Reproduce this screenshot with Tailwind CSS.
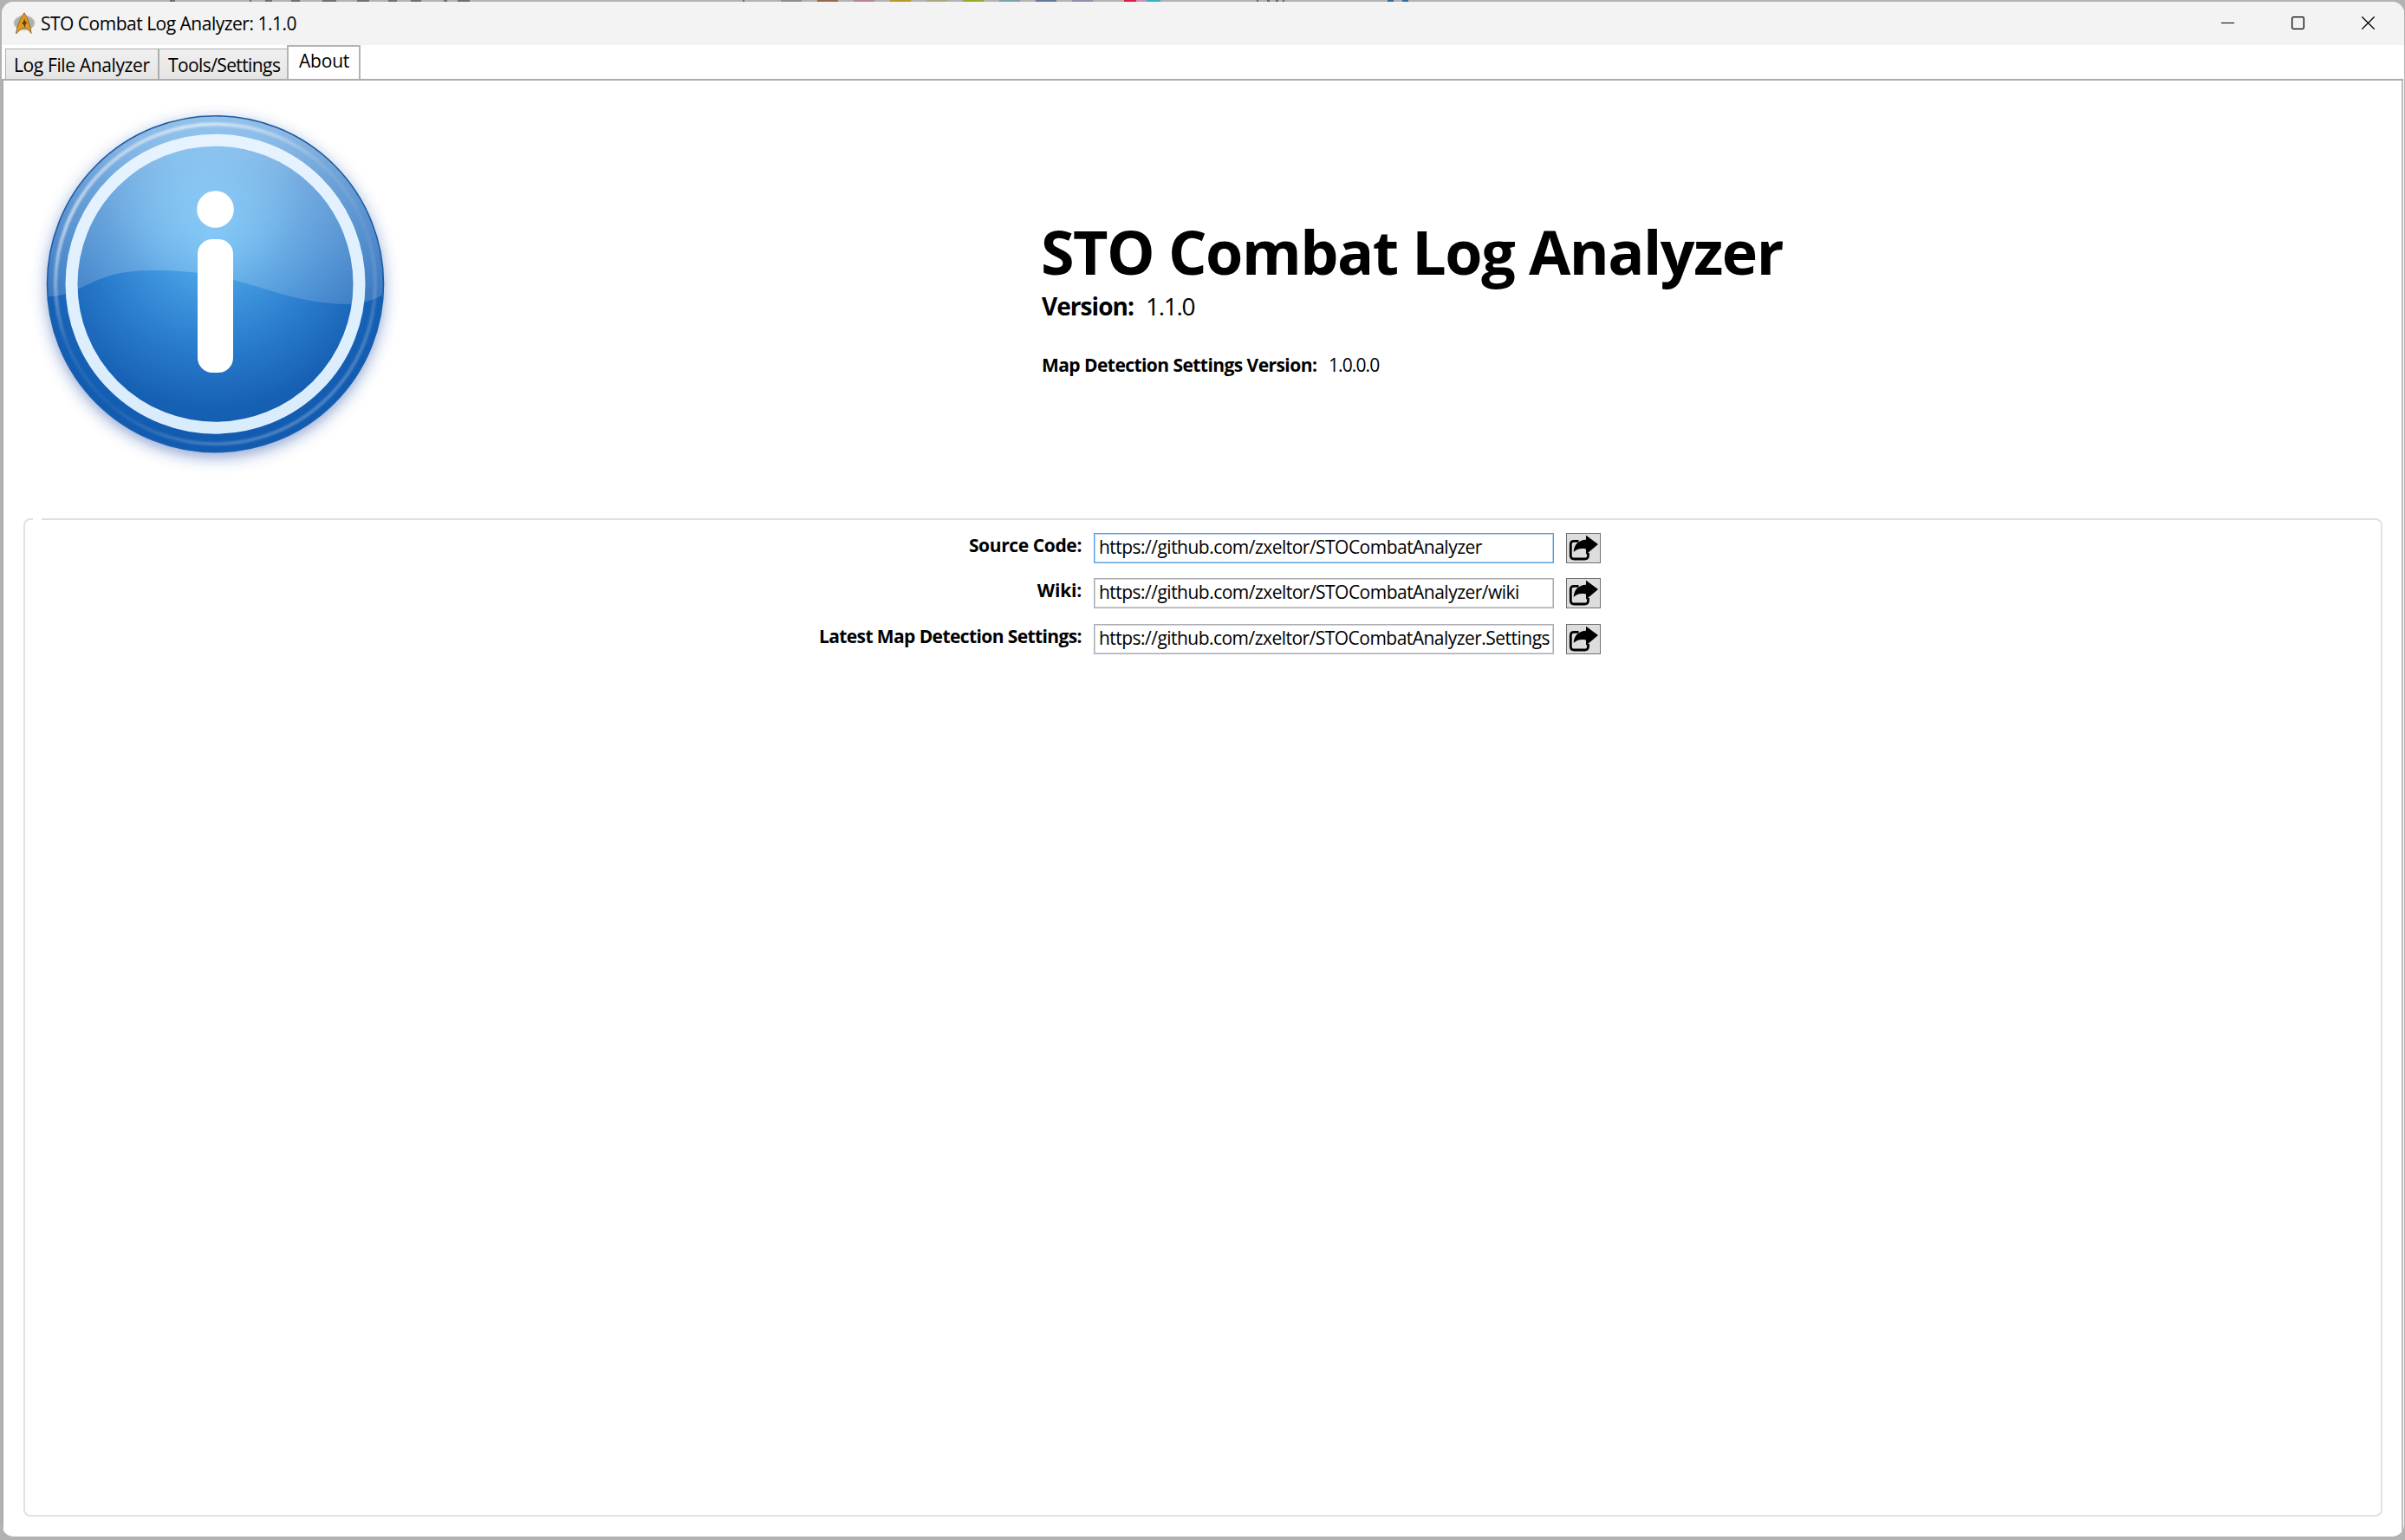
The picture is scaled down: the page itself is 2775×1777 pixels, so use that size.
<!DOCTYPE html>
<html lang="en">
<head>
<meta charset="utf-8">
<title>STO Combat Log Analyzer: 1.1.0</title>
<script src="https://cdn.jsdelivr.net/npm/@tailwindcss/browser@4"></script>
</head>
<body class="font-['Open_Sans',sans-serif] text-[21px] text-black">
<svg class="hidden">
  <symbol id="share" viewBox="0 0 38 33">
    <path d="M13.500 8.300H8.300Q4.300 8.300 4.300 12.300V25Q4.300 29 8.300 29H20.500Q24.500 29 24.500 25V22" fill="none" stroke="#000" stroke-width="2.800"/>
    <path d="M22 1.700L36 12L22 23.700V17.500C15.500 16.300 11.500 17.300 7.700 21C8 12.500 13.500 7 22 6.700Z" fill="#000"/>
  </symbol>
</svg>
<div class="relative w-[2775px] h-[1777px] overflow-hidden bg-[#b2b2b2] pt-[2px] pb-[4px] pl-[2px] pr-[1px]">
  <!-- sliver of the window behind -->
  <div class="absolute top-0 left-0 w-full h-[2px]">
    <svg class="block" width="2775" height="2" viewBox="0 0 2775 2">
      <path d="M196 1h6M288 1h2M306 1h8M336 1h10M372 1h16M412 1h14M448 1h10M474 1h12M512 1h4M528 1h14M857 1h2" stroke="#6f6f6f" stroke-width="2"/>
      <path d="M901 1h24" stroke="#8d8d8d" stroke-width="2"/><path d="M943 1h24" stroke="#9c6651" stroke-width="2"/>
      <path d="M985 1h24" stroke="#b98591" stroke-width="2"/><path d="M1027 1h24" stroke="#b59a2b" stroke-width="2"/>
      <path d="M1069 1h24" stroke="#aca783" stroke-width="2"/><path d="M1111 1h24" stroke="#8fae2c" stroke-width="2"/>
      <path d="M1153 1h24" stroke="#7ba3ac" stroke-width="2"/><path d="M1195 1h24" stroke="#647a98" stroke-width="2"/>
      <path d="M1237 1h24" stroke="#928da9" stroke-width="2"/>
      <path d="M1297 1h14" stroke="#d81e46" stroke-width="2"/><path d="M1311 1h12" stroke="#c792b4" stroke-width="2"/><path d="M1323 1h16" stroke="#35b1c4" stroke-width="2"/>
      <path d="M1450 1h2M1462 1h3M1472 1h3M1480 1h2" stroke="#666" stroke-width="2"/><path d="M1601 1h7M1618 1h7" stroke="#2f6ea5" stroke-width="2"/>
    </svg>
  </div>
  <div class="flex flex-col w-full h-full bg-white rounded-[14px] overflow-hidden">
    <!-- title bar -->
    <header class="flex items-center h-[50px] shrink-0 bg-[#f3f3f3] pl-[13px]">
      <svg width="26" height="27" viewBox="0 0 26 27" class="shrink-0">
        <ellipse cx="13" cy="12.500" rx="12" ry="8.500" fill="#b0b0b0" stroke="#cfcfcf"/>
        <path d="M13 .8C17 7 20.500 17 21 24.500C18 20.500 15.500 18 13 18C10 19 6.500 21.500 3.500 25C4.500 16 9 6 13 .8Z" fill="#e39a1c" stroke="#8c6a38"/>
        <path d="M13 7L14.300 11L16.500 12L14.500 13.500L14 18L12 14L10 13L12.200 11Z" fill="#5a3d10"/>
      </svg>
      <span class="ml-[6px] -mt-px leading-[28px] tracking-[-0.5px] whitespace-pre">STO Combat Log Analyzer: 1.1.0</span>
      <div class="ml-auto flex items-center pr-[34px] gap-[66px] -mt-px">
        <svg width="15" height="15" viewBox="0 0 15 15"><path d="M0 7.500H15" stroke="#000"/></svg>
        <svg width="15" height="15" viewBox="0 0 15 15"><rect x=".7" y=".7" width="13.600" height="13.600" rx="1.500" fill="none" stroke="#000" stroke-width="1.300"/></svg>
        <svg width="15" height="15" viewBox="0 0 15 15"><path d="M.3 .3L14.700 14.700M14.700 .3L.3 14.700" stroke="#000" stroke-width="1.300"/></svg>
      </div>
    </header>
    <!-- tabs -->
    <nav class="flex items-end h-[39px] shrink-0 pl-[4px]">
      <div class="w-[177px] h-[35px] border border-b-0 border-[#acacac] bg-linear-to-b from-[#f0f0f0] to-[#e5e5e5] pl-[9px] pt-[4px] leading-[28px] tracking-[-0.37px] whitespace-nowrap">Log File Analyzer</div>
      <div class="w-[149px] h-[35px] border border-b-0 border-[#acacac] bg-linear-to-b from-[#f0f0f0] to-[#e5e5e5] pl-[10px] pt-[4px] leading-[28px] tracking-[-0.6px] whitespace-nowrap">Tools/Settings</div>
      <div class="w-[85px] h-[39px] -ml-px border-2 border-b-0 border-[#b4b4b4] bg-white pl-[12px] pt-[2px] leading-[28px] tracking-[-0.2px]">About</div>
    </nav>
    <main class="flex flex-col flex-1 min-h-0 border-t-2 border-l-2 border-[#acacac] mr-px">
      <div class="flex flex-col flex-1 min-h-0 border-r-2 border-[#bcbcbc]">
      <section class="flex h-[505px] shrink-0">
        <svg class="ml-[26px] mt-[17px] shrink-0" width="440" height="440" viewBox="30.500 110 440 440">
          <defs>
            <radialGradient id="base" gradientUnits="userSpaceOnUse" cx="245" cy="270" r="235">
              <stop offset="0" stop-color="#55b2f2"/><stop offset=".25" stop-color="#449de3"/><stop offset=".55" stop-color="#2b7dcd"/><stop offset=".85" stop-color="#1761b5"/><stop offset="1" stop-color="#125bb0"/>
            </radialGradient>
            <linearGradient id="gloss" x1="0" y1="0" x2="0" y2="1">
              <stop offset="0" stop-color="#fff" stop-opacity=".52"/><stop offset=".35" stop-color="#fff" stop-opacity=".33"/><stop offset="1" stop-color="#fff" stop-opacity=".15"/>
            </linearGradient>
            <linearGradient id="rim" x1=".15" y1="0" x2=".85" y2="1">
              <stop offset="0" stop-color="#fff" stop-opacity=".35"/><stop offset=".15" stop-color="#fff" stop-opacity=".6"/><stop offset=".4" stop-color="#fff" stop-opacity=".1"/><stop offset=".6" stop-color="#fff" stop-opacity=".05"/><stop offset=".9" stop-color="#fff" stop-opacity=".25"/>
            </linearGradient>
            <linearGradient id="ring" x1="0" y1="0" x2="0" y2="1"><stop offset="0" stop-color="#e6f3ff"/><stop offset="1" stop-color="#d9ecfc"/></linearGradient>
            <linearGradient id="edge" x1="0" y1="0" x2="0" y2="1"><stop offset="0" stop-color="#1d5a9f"/><stop offset="1" stop-color="#1361b4"/></linearGradient>
            <radialGradient id="glow" gradientUnits="userSpaceOnUse" cx="235" cy="210" r="120"><stop offset="0" stop-color="#8fd0fb" stop-opacity=".5"/><stop offset="1" stop-color="#8fd0fb" stop-opacity="0"/></radialGradient>
            <filter id="shadow" x="-20%" y="-20%" width="140%" height="140%"><feGaussianBlur stdDeviation="9"/></filter>
            <filter id="soft"><feGaussianBlur stdDeviation="1.2"/></filter>
            <clipPath id="disc"><circle cx="249" cy="327.700" r="194"/></clipPath>
          </defs>
          <circle cx="249" cy="333" r="194" fill="#2c4fa8" fill-opacity=".55" filter="url(#shadow)"/>
          <circle cx="249" cy="327.700" r="194" fill="url(#base)"/>
          <g clip-path="url(#disc)" >
            <path d="M50 130H450V334C438 344 425 350 397 351C340 349 310 332 250 318C215 312 180 311 155 313C105 317 90 343 55 342Z" fill="url(#gloss)"/>
            <path d="M50 130H450V334C438 344 425 350 397 351C340 349 310 332 250 318C215 312 180 311 155 313C105 317 90 343 55 342Z" fill="url(#glow)"/>
          </g>
          <circle cx="249" cy="327.700" r="194" fill="none" stroke="url(#edge)" stroke-width="1.600"/>
          <circle cx="249" cy="327.700" r="184.500" fill="none" stroke="url(#rim)" stroke-width="4" filter="url(#soft)"/>
          <circle cx="249" cy="327.700" r="166" fill="none" stroke="url(#ring)" stroke-width="14"/>
          <circle cx="249" cy="241.500" r="21.300" fill="#fff"/>
          <rect x="228.500" y="276" width="41" height="154" rx="17" fill="#fff"/>
        </svg>
        <div class="ml-[732px] pt-[151px] whitespace-nowrap">
          <h1 class="-ml-[1px] text-[70px] leading-[92px] font-bold tracking-[-1.5px]">STO Combat Log Analyzer</h1>
          <div class="-mt-px flex text-[28px] leading-[36px]"><b class="w-[120px] font-bold tracking-[-0.95px]">Version:</b><span class="tracking-[-1.3px]">1.1.0</span></div>
          <div class="flex mt-[36px] leading-[28px]"><b class="w-[331px] font-bold tracking-[-0.56px]">Map Detection Settings Version:</b><span class="tracking-[-0.9px]">1.0.0.0</span></div>
        </div>
      </section>
      <!-- links group -->
      <section class="relative flex-1 ml-[23px] mr-[22px] mb-[23px] border-2 border-[#dce3e7] rounded-[8px] pt-[15px] flex flex-col">
        <div class="absolute left-[9px] -top-[2px] w-[10px] h-[2px] bg-white"></div>
        <div class="flex h-[35px]">
          <div class="w-[1219px] text-right leading-[28px] font-bold tracking-[-0.38px]">Source Code:</div>
          <div class="ml-[14px] w-[531px] h-[35px] border border-[#569de5] shadow-[inset_0_0_0_1px_#b4d2f1] pl-[5px] leading-[30px] tracking-[-0.52px] whitespace-nowrap">https://github.com/zxeltor/STOCombatAnalyzer</div>
          <div class="ml-[14px] w-[40px] h-[35px] border border-[#707070] bg-[#dddddd]"><svg width="38" height="33"><use href="#share"/></svg></div>
        </div>
        <div class="flex h-[35px] mt-[17px]">
          <div class="w-[1219px] text-right leading-[28px] font-bold tracking-[-0.2px]">Wiki:</div>
          <div class="ml-[14px] w-[531px] h-[35px] border border-[#abadb3] shadow-[inset_0_0_0_1px_#d0d1d4] pl-[5px] leading-[30px] tracking-[-0.52px] whitespace-nowrap">https://github.com/zxeltor/STOCombatAnalyzer/wiki</div>
          <div class="ml-[14px] w-[40px] h-[35px] border border-[#707070] bg-[#dddddd]"><svg width="38" height="33"><use href="#share"/></svg></div>
        </div>
        <div class="flex h-[35px] mt-[18px]">
          <div class="w-[1219px] text-right leading-[28px] font-bold tracking-[-0.6px]">Latest Map Detection Settings:</div>
          <div class="ml-[14px] w-[531px] h-[35px] border border-[#abadb3] shadow-[inset_0_0_0_1px_#d0d1d4] pl-[5px] leading-[30px] tracking-[-0.53px] whitespace-nowrap">https://github.com/zxeltor/STOCombatAnalyzer.Settings</div>
          <div class="ml-[14px] w-[40px] h-[35px] border border-[#707070] bg-[#dddddd]"><svg width="38" height="33"><use href="#share"/></svg></div>
        </div>
      </section>
      </div>
    </main>
  </div>
</div>
</body>
</html>
